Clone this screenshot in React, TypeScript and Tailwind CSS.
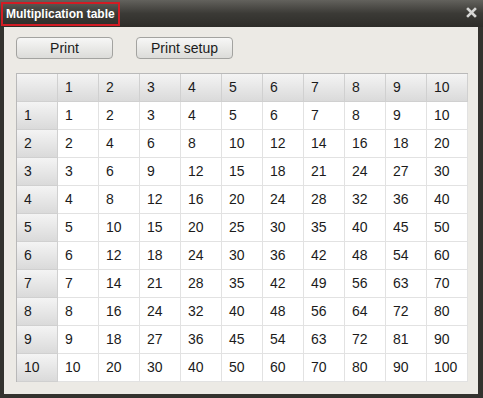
import { Fragment } from "react";

const nums = [1, 2, 3, 4, 5, 6, 7, 8, 9, 10];

const headCell =
  "h-[28px] pl-[7px] flex items-center bg-gradient-to-b from-[#f4f4f4] to-[#dadada] border-r border-b border-[#d0d0d0]";
const bodyCell =
  "h-[28px] pl-[7px] flex items-center bg-white border-r border-b border-[#e2e2e2]";

export default function App() {
  return (
    <div
      className="w-[483px] h-[398px] flex flex-col bg-[#33322e] text-[14px] text-[#1b1b1b]"
      style={{ fontFamily: '"Liberation Sans", Arial, sans-serif' }}
    >
      {/* title bar */}
      <div className="h-[27px] flex items-center justify-between bg-gradient-to-b from-[#63625d] via-[#3b3a36] to-[#2e2d29] pl-[1px] pr-[6px]">
        <div className="h-[24px] flex items-center px-[3px] border-2 border-[#d21c24] text-white font-bold text-[12px]">
          Multiplication table
        </div>
        <svg width="11" height="11" viewBox="0 0 11 11" className="mt-[-2px]">
          <path d="M2 2 L9 9 M9 2 L2 9" stroke="#d6d6d4" strokeWidth="2.6" strokeLinecap="square" />
        </svg>
      </div>

      {/* content */}
      <div className="flex-1 ml-[4px] mr-[5px] mb-[4px] bg-[#eceae5] pt-[10px] pl-[12px]">
        <div className="flex gap-[23px]">
          <button className="w-[97px] h-[22px] rounded-[4px] border border-[#a3a3a0] bg-gradient-to-b from-[#f7f7f6] to-[#dcdcd9] text-[14px]">
            Print
          </button>
          <button className="w-[97px] h-[22px] rounded-[4px] border border-[#a3a3a0] bg-gradient-to-b from-[#f7f7f6] to-[#dcdcd9] text-[14px]">
            Print setup
          </button>
        </div>

        <div className="mt-[14px] w-[452px] border-l border-t border-[#b9b9b9] grid grid-cols-[repeat(11,41px)]">
          <div className={headCell}></div>
          {nums.map((c) => (
            <div key={"h" + c} className={headCell}>
              {c}
            </div>
          ))}
          {nums.map((r) => (
            <Fragment key={"r" + r}>
              <div className={headCell + " pl-[6px]"}>{r}</div>
              {nums.map((c) => (
                <div key={r + "-" + c} className={bodyCell}>
                  {r * c}
                </div>
              ))}
            </Fragment>
          ))}
        </div>
      </div>
    </div>
  );
}
